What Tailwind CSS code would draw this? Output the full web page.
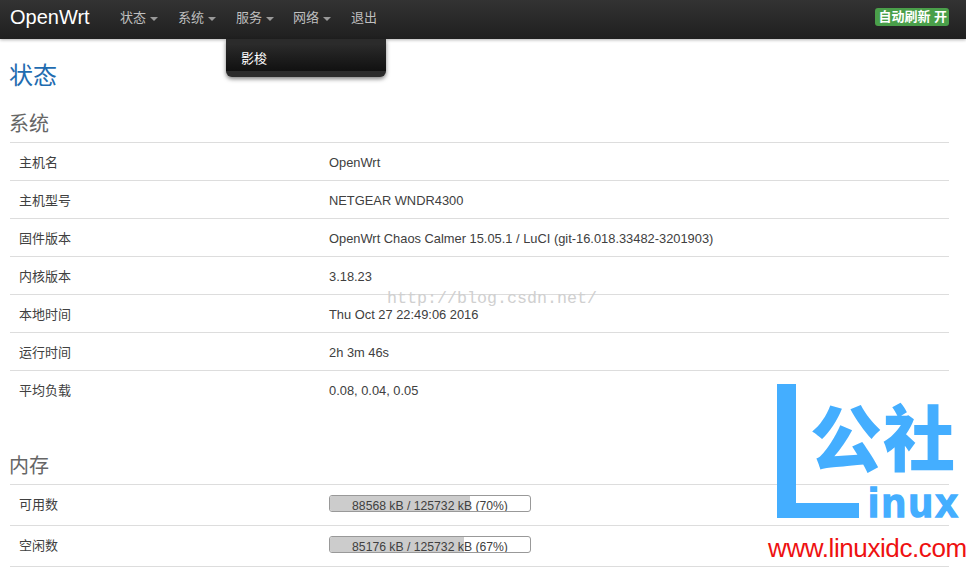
<!DOCTYPE html>
<html lang="en">
<head>
    <meta charset="UTF-8">
    <title>OpenWrt - 状态</title>
    <script src="https://cdn.jsdelivr.net/npm/@tailwindcss/browser@4"></script>
</head>
<body class="relative w-[966px] h-[574px] overflow-hidden bg-white text-[13px] text-[#404040] font-['Liberation_Sans','Noto_Sans_CJK_SC',sans-serif]">
    <!-- top bar -->
    <header class="flex items-start h-[39px] pl-[10px] pr-[17px] bg-gradient-to-b from-[#333333] to-[#1f1f1f] shadow-[0_1px_3px_rgba(0,0,0,0.3)]">
        <a class="w-[110px] mt-[5px] leading-[24px] text-[20px] text-white">OpenWrt</a>
        <nav class="flex mt-[8px] h-[20px] text-[13px] text-[#bfbfbf]">
            <a class="flex items-center w-[58px]">状态<span class="ml-[4px] mt-[2px] border-x-[4px] border-x-transparent border-t-[4px] border-t-[#999999]"></span></a>
            <a class="flex items-center w-[58px]">系统<span class="ml-[4px] mt-[2px] border-x-[4px] border-x-transparent border-t-[4px] border-t-[#999999]"></span></a>
            <a class="flex items-center w-[57px]">服务<span class="ml-[4px] mt-[2px] border-x-[4px] border-x-transparent border-t-[4px] border-t-[#999999]"></span></a>
            <a class="flex items-center w-[58px]">网络<span class="ml-[4px] mt-[2px] border-x-[4px] border-x-transparent border-t-[4px] border-t-[#999999]"></span></a>
            <a class="flex items-center">退出</a>
        </nav>
        <span class="ml-auto mt-[8px] pl-[3px] pr-[2px] h-[18px] leading-[18px] rounded-[3px] bg-[#4a9f4a] text-white text-[13px] font-bold">自动刷新 开</span>
    </header>

    <!-- services dropdown -->
    <div class="absolute left-[226px] top-[39px] w-[160px] h-[38px] py-[6px] rounded-b-[6px] bg-[#2b2b2b] shadow-[0_2px_4px_rgba(0,0,0,0.5)]">
        <a class="block h-[26px] pl-[15px] leading-[28px] text-white bg-gradient-to-b from-[#2a2a2a] to-[#111111]">影梭</a>
    </div>

    <main class="pl-[9px] pr-[10px]">
        <h2 class="mt-[23px] h-[28px] leading-[28px] text-[24px] text-[#1f6cb0]">状态</h2>

        <h3 class="mt-[20px] h-[28px] leading-[28px] text-[20px] text-[#666666]">系统</h3>
        <div class="w-[939px] ml-[1px] mt-[4px] border-t border-[#dddddd]">
            <div class="flex items-center h-[38px] pt-[2px] border-b border-[#dddddd]"><span class="w-[319px] pl-[9px]">主机名</span><span class="text-[12.87px]">OpenWrt</span></div>
            <div class="flex items-center h-[38px] pt-[2px] border-b border-[#dddddd]"><span class="w-[319px] pl-[9px]">主机型号</span><span class="text-[12.87px]">NETGEAR WNDR4300</span></div>
            <div class="flex items-center h-[38px] pt-[2px] border-b border-[#dddddd]"><span class="w-[319px] pl-[9px]">固件版本</span><span class="text-[12.87px]">OpenWrt Chaos Calmer 15.05.1 / LuCI (git-16.018.33482-3201903)</span></div>
            <div class="flex items-center h-[38px] pt-[2px] border-b border-[#dddddd]"><span class="w-[319px] pl-[9px]">内核版本</span><span class="text-[12.87px]">3.18.23</span></div>
            <div class="flex items-center h-[38px] pt-[2px] border-b border-[#dddddd]"><span class="w-[319px] pl-[9px]">本地时间</span><span class="text-[12.87px]">Thu Oct 27 22:49:06 2016</span></div>
            <div class="flex items-center h-[38px] pt-[2px] border-b border-[#dddddd]"><span class="w-[319px] pl-[9px]">运行时间</span><span class="text-[12.87px]">2h 3m 46s</span></div>
            <div class="flex items-center h-[38px] pt-[2px]"><span class="w-[319px] pl-[9px]">平均负载</span><span class="text-[12.87px]">0.08, 0.04, 0.05</span></div>
        </div>

        <h3 class="mt-[43px] h-[28px] leading-[28px] text-[20px] text-[#666666]">内存</h3>
        <div class="w-[939px] ml-[1px] mt-[4px] border-t border-[#dddddd]">
            <div class="flex items-center h-[41px] border-b border-[#dddddd]">
                <span class="w-[319px] pl-[9px]">可用数</span>
                <div class="relative w-[202px] h-[17px] mb-[4px] leading-[21px] text-center text-[12.2px] rounded-[3px] border border-[#999999] overflow-hidden">
                    <div class="absolute left-0 top-0 h-full bg-[#cccccc]" style="width:70%"></div>
                    <span class="relative">88568 kB / 125732 kB (70%)</span>
                </div>
            </div>
            <div class="flex items-center h-[41px] border-b border-[#dddddd]">
                <span class="w-[319px] pl-[9px]">空闲数</span>
                <div class="relative w-[202px] h-[17px] mb-[4px] leading-[21px] text-center text-[12.2px] rounded-[3px] border border-[#999999] overflow-hidden">
                    <div class="absolute left-0 top-0 h-full bg-[#cccccc]" style="width:67%"></div>
                    <span class="relative">85176 kB / 125732 kB (67%)</span>
                </div>
            </div>
        </div>
    </main>

    <!-- csdn watermark -->
    <div class="absolute left-[387px] top-[289px] text-[16.67px] leading-[20px] text-[#d0d0d0] font-['Liberation_Mono',monospace]">http://blog.csdn.net/</div>

    <!-- linuxidc logo -->
    <div class="absolute left-[777px] top-[384px] w-[19px] h-[134px] bg-[#44aeff]"></div>
    <div class="absolute left-[777px] top-[503px] w-[82px] h-[15px] bg-[#44aeff]"></div>
    <div class="absolute left-[810px] top-[394px] text-[72px] leading-[80px] tracking-[1px] font-black text-[#44aeff] font-['Noto_Sans_CJK_SC',sans-serif]">公社</div>
    <div class="absolute left-[868px] top-[483px] text-[40px] leading-[40px] tracking-[2.5px] font-bold text-[#44aeff] [-webkit-text-stroke:1.5px_#44aeff] font-['Liberation_Sans',sans-serif]">inux</div>
    <div class="absolute left-[768px] top-[533px] text-[26px] leading-[30px] tracking-[-0.4px] text-[#ee1111] font-['Liberation_Sans',sans-serif]">www.linuxidc.com</div>
</body>
</html>
